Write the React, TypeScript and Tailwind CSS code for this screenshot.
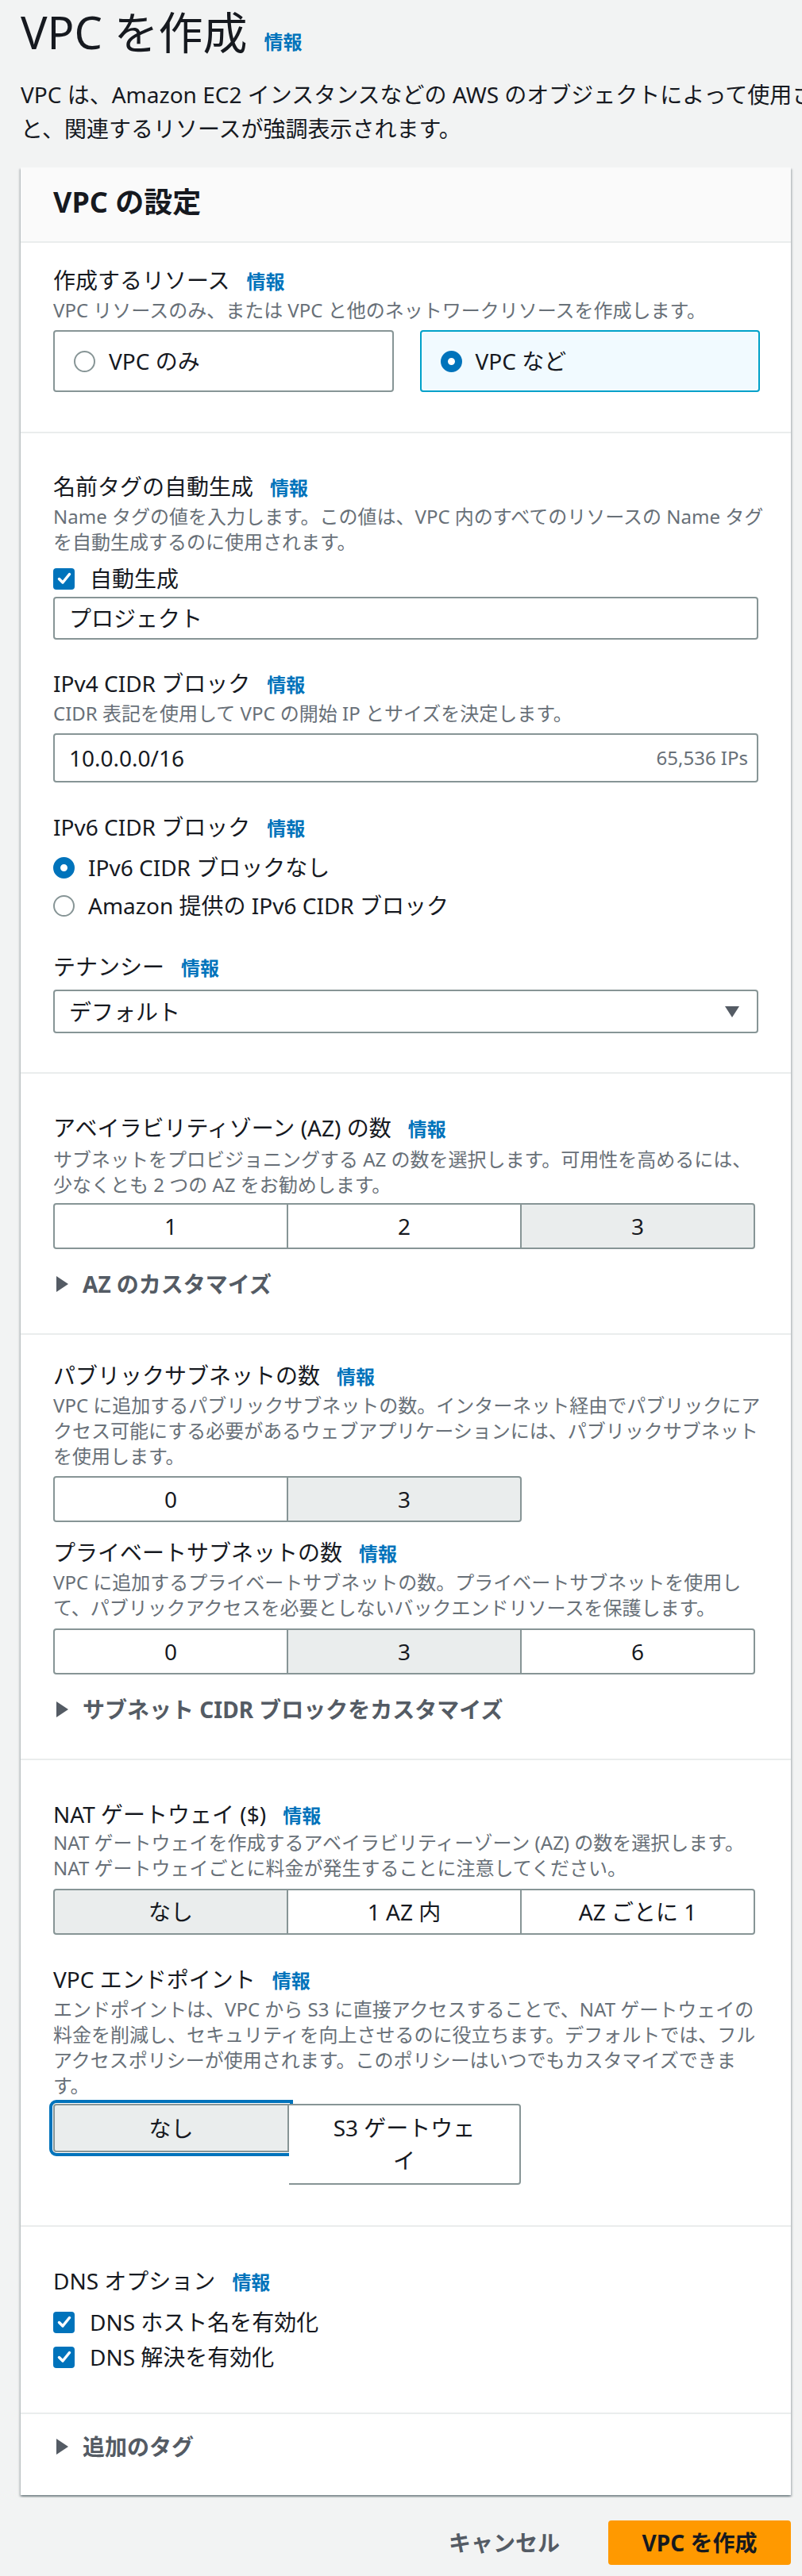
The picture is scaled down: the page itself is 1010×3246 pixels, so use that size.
import type { ReactNode } from "react";

const info = "ml-[21px] text-[24px] font-bold text-[#0073bb]";

function Label({ children, className = "" }: { children: ReactNode; className?: string }) {
  return (
    <div className={`flex items-baseline ${className}`}>
      <span className="text-[28px] leading-[40px] text-[#16191f]">{children}</span>
      <a className={info}>情報</a>
    </div>
  );
}

function Desc({ children, className = "" }: { children: ReactNode; className?: string }) {
  return <p className={`whitespace-nowrap text-[24px] leading-[32px] text-[#687078] ${className}`}>{children}</p>;
}

function Radio({ on }: { on?: boolean }) {
  return on ? (
    <span className="block h-[27px] w-[27px] shrink-0 rounded-full border-[9px] border-[#0073bb] bg-white" />
  ) : (
    <span className="block h-[27px] w-[27px] shrink-0 rounded-full border-2 border-[#879596] bg-white" />
  );
}

function Check({ label, className = "" }: { label: string; className?: string }) {
  return (
    <div className={`flex h-[40px] items-center gap-[19px] ${className}`}>
      <span className="flex h-[27px] w-[27px] items-center justify-center rounded-[4px] bg-[#0073bb]">
        <svg width="18" height="16" viewBox="0 0 18 16">
          <path d="M2.5 8.5 L7 13 L15.5 2.5" fill="none" stroke="white" strokeWidth="3.5" strokeLinecap="round" strokeLinejoin="round" />
        </svg>
      </span>
      <span className="text-[28px] text-[#16191f]">{label}</span>
    </div>
  );
}

function Segmented({ items, selected, className = "" }: { items: string[]; selected: number; className?: string }) {
  return (
    <div className={`flex ${className}`}>
      {items.map((item, i) => (
        <div
          key={item}
          className={`flex h-[58px] items-center justify-center border-2 border-[#879596] text-[28px] text-[#16191f] ${
            i === 0 ? "w-[296px] rounded-l-[4px]" : "w-[294px] border-l-0"
          } ${i === items.length - 1 ? "rounded-r-[4px]" : ""} ${i === selected ? "bg-[#eaeded]" : "bg-white"}`}
        >
          {item}
        </div>
      ))}
    </div>
  );
}

function Expander({ label, className = "" }: { label: string; className?: string }) {
  return (
    <div className={`flex h-[40px] items-center ${className}`}>
      <svg width="17" height="22" viewBox="0 0 17 22" className="ml-[3px] mr-[17px]">
        <path d="M1 1 L16 11 L1 21 Z" fill="#545b64" />
      </svg>
      <span className="text-[28px] font-bold text-[#545b64]">{label}</span>
    </div>
  );
}

export default function App() {
  return (
    <div className="min-h-screen w-[1010px] overflow-hidden bg-[#f2f3f3] font-['Noto_Sans','Noto_Sans_CJK_JP',sans-serif] pb-[14px]">
      <div className="pl-[26px] pt-[8px]">
        <div className="flex items-baseline">
          <h1 className="text-[56px] leading-[64px] text-[#16191f]">VPC を作成</h1>
          <a className="ml-[21px] text-[24px] font-bold text-[#0073bb]">情報</a>
        </div>
        <div className="mt-[26px] whitespace-nowrap text-[28px] leading-[43px] text-[#16191f]">
          <div>VPC は、Amazon EC2 インスタンスなどの AWS のオブジェクトによって使用される分離された仮想ネットワークです。設定を変更する</div>
          <div>と、関連するリソースが強調表示されます。</div>
        </div>

        <div className="mt-[27px] w-[970px] bg-white shadow-[0_2px_2px_0_rgba(0,28,36,0.3),2px_2px_2px_0_rgba(0,28,36,0.15),-2px_2px_2px_0_rgba(0,28,36,0.15)]">
          {/* header */}
          <div className="border-b-2 border-[#eaeded] bg-[#fafafa] px-[41px] pb-[29px] pt-[24px]">
            <h2 className="text-[36px] font-bold leading-[40px] text-[#16191f]">VPC の設定</h2>
          </div>

          {/* resources */}
          <div className="border-b-2 border-[#eaeded] px-[41px] pb-[50px] pt-[27px]">
            <Label>作成するリソース</Label>
            <Desc className="mt-[2px]">VPC リソースのみ、または VPC と他のネットワークリソースを作成します。</Desc>
            <div className="mt-[9px] grid w-[890px] grid-cols-2 gap-[33px]">
              <div className="flex h-[78px] items-center gap-[17px] rounded-[4px] border-2 border-[#879596] bg-white pl-[24px]">
                <Radio />
                <span className="text-[28px] text-[#16191f]">VPC のみ</span>
              </div>
              <div className="flex h-[78px] items-center gap-[17px] rounded-[4px] border-2 border-[#00a1c9] bg-[#f1faff] pl-[24px]">
                <Radio on />
                <span className="text-[28px] text-[#16191f]">VPC など</span>
              </div>
            </div>
          </div>

          {/* name tag, cidr, tenancy */}
          <div className="border-b-2 border-[#eaeded] px-[41px] pb-[49px] pt-[47px]">
            <Label>名前タグの自動生成</Label>
            <Desc className="mt-[2px]">
              Name タグの値を入力します。この値は、VPC 内のすべてのリソースの Name タグ
              <br />
              を自動生成するのに使用されます。
            </Desc>
            <Check label="自動生成" className="mt-[10px]" />
            <div className="mt-[3px] flex h-[54px] w-[888px] items-center rounded-[4px] border-2 border-[#879596] bg-white pl-[18px] text-[28px] text-[#16191f]">
              プロジェクト
            </div>

            <Label className="mt-[35px]">IPv4 CIDR ブロック</Label>
            <Desc className="mt-[2px]">CIDR 表記を使用して VPC の開始 IP とサイズを決定します。</Desc>
            <div className="mt-[9px] flex h-[62px] w-[888px] items-center justify-between rounded-[4px] border-2 border-[#879596] bg-white pl-[18px] pr-[11px]">
              <span className="text-[28px] text-[#16191f]">10.0.0.0/16</span>
              <span className="text-[24px] text-[#687078]">65,536 IPs</span>
            </div>

            <Label className="mt-[36px]">IPv6 CIDR ブロック</Label>
            <div className="mt-[11px] flex h-[40px] items-center gap-[17px]">
              <Radio on />
              <span className="text-[28px] text-[#16191f]">IPv6 CIDR ブロックなし</span>
            </div>
            <div className="mt-[8px] flex h-[40px] items-center gap-[17px]">
              <Radio />
              <span className="text-[28px] text-[#16191f]">Amazon 提供の IPv6 CIDR ブロック</span>
            </div>

            <Label className="mt-[37px]">テナンシー</Label>
            <div className="mt-[9px] flex h-[55px] w-[888px] items-center justify-between rounded-[4px] border-2 border-[#879596] bg-white pl-[18px] pr-[21px]">
              <span className="text-[28px] text-[#16191f]">デフォルト</span>
              <svg width="20" height="16" viewBox="0 0 20 16">
                <path d="M1 1 L19 1 L10 15 Z" fill="#545b64" />
              </svg>
            </div>
          </div>

          {/* AZ */}
          <div className="border-b-2 border-[#eaeded] px-[41px] pb-[42px] pt-[48px]">
            <Label>アベイラビリティゾーン (AZ) の数</Label>
            <Desc className="mt-[4px]">
              サブネットをプロビジョニングする AZ の数を選択します。可用性を高めるには、
              <br />
              少なくとも 2 つの AZ をお勧めします。
            </Desc>
            <Segmented items={["1", "2", "3"]} selected={2} className="mt-[7px]" />
            <Expander label="AZ のカスタマイズ" className="mt-[24px]" />
          </div>

          {/* subnets */}
          <div className="border-b-2 border-[#eaeded] px-[41px] pb-[42px] pt-[31px]">
            <Label>パブリックサブネットの数</Label>
            <Desc className="mt-[2px]">
              VPC に追加するパブリックサブネットの数。インターネット経由でパブリックにア
              <br />
              クセス可能にする必要があるウェブアプリケーションには、パブリックサブネット
              <br />
              を使用します。
            </Desc>
            <Segmented items={["0", "3"]} selected={1} className="mt-[9px]" />

            <Label className="mt-[18px]">プライベートサブネットの数</Label>
            <Desc className="mt-[2px]">
              VPC に追加するプライベートサブネットの数。プライベートサブネットを使用し
              <br />
              て、パブリックアクセスを必要としないバックエンドリソースを保護します。
            </Desc>
            <Segmented items={["0", "3", "6"]} selected={1} className="mt-[10px]" />
            <Expander label="サブネット CIDR ブロックをカスタマイズ" className="mt-[24px]" />
          </div>

          {/* NAT + endpoints */}
          <div className="border-b-2 border-[#eaeded] px-[41px] pb-[51px] pt-[48px]">
            <Label>NAT ゲートウェイ ($)</Label>
            <Desc>
              NAT ゲートウェイを作成するアベイラビリティーゾーン (AZ) の数を選択します。
              <br />
              NAT ゲートウェイごとに料金が発生することに注意してください。
            </Desc>
            <Segmented items={["なし", "1 AZ 内", "AZ ごとに 1"]} selected={0} className="mt-[10px]" />

            <Label className="mt-[36px]">VPC エンドポイント</Label>
            <Desc className="mt-[2px]">
              エンドポイントは、VPC から S3 に直接アクセスすることで、NAT ゲートウェイの
              <br />
              料金を削減し、セキュリティを向上させるのに役立ちます。デフォルトでは、フル
              <br />
              アクセスポリシーが使用されます。このポリシーはいつでもカスタマイズできま
              <br />
              す。
            </Desc>
            <div className="mt-[7px] flex items-start">
              <div className="flex h-[61px] w-[297px] items-center justify-center rounded-l-[4px] border-2 border-[#879596] bg-[#eaeded] text-[28px] text-[#16191f] outline-4 outline-offset-1 outline-solid outline-[#0073bb]">
                なし
              </div>
              <div className="flex h-[102px] w-[292px] items-center justify-center rounded-r-[4px] border-2 border-l-0 border-[#879596] bg-white text-center text-[28px] leading-[41px] text-[#16191f]">
                S3 ゲートウェ
                <br />イ
              </div>
            </div>
          </div>

          {/* DNS */}
          <div className="border-b-2 border-[#eaeded] px-[41px] pb-[50px] pt-[48px]">
            <Label>DNS オプション</Label>
            <Check label="DNS ホスト名を有効化" className="mt-[12px]" />
            <Check label="DNS 解決を有効化" className="mt-[4px]" />
          </div>

          {/* tags */}
          <div className="px-[41px] pb-[41px] pt-[21px]">
            <Expander label="追加のタグ" />
          </div>
        </div>

        <div className="mt-[32px] flex w-[970px] items-center justify-end gap-[21px]">
          <button className="px-[40px] text-[28px] font-bold text-[#545b64]">キャンセル</button>
          <button className="flex h-[56px] w-[230px] items-center justify-center rounded-[4px] bg-[#ff9900] text-[28px] font-bold text-[#16191f]">
            VPC を作成
          </button>
        </div>
      </div>
    </div>
  );
}
